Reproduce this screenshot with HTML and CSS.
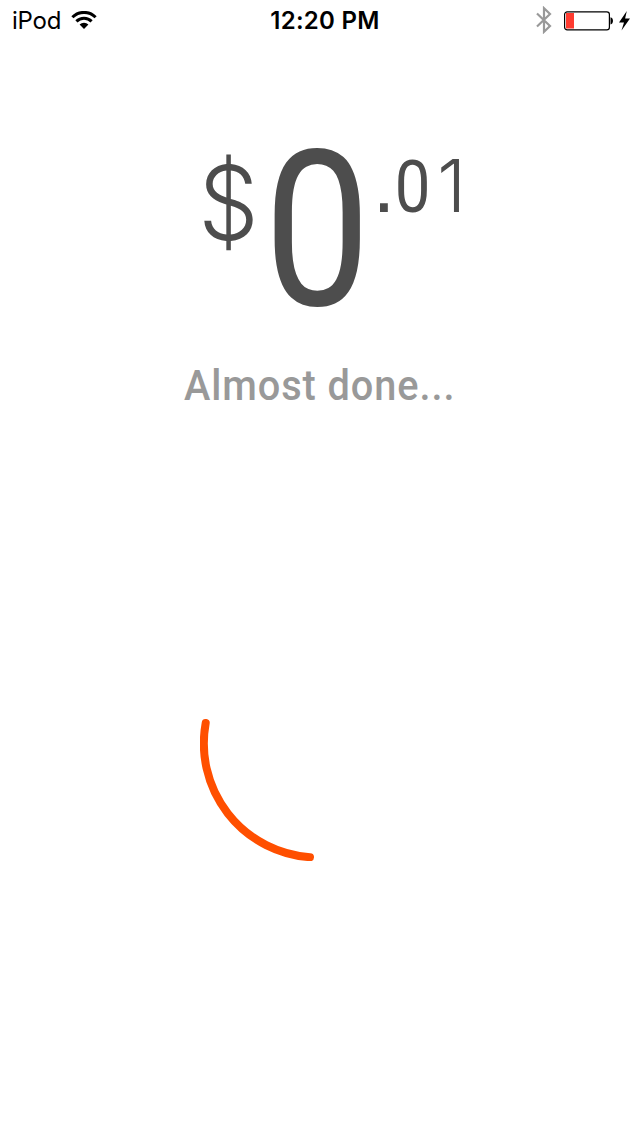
FILE: index.html
```
<!DOCTYPE html>
<html lang="en">
<head>
<meta charset="utf-8">
<title>Payment</title>
<link rel="stylesheet" href="styles.css">
</head>
<body>
<header class="status">
  <div class="carrier">
    <span>iPod</span>
    <svg class="wifi" width="26" height="19" viewBox="0 0 26 19">
      <path d="M1.4 6.2A16.4 16.4 0 0 1 24.6 6.2" fill="none" stroke="#000" stroke-width="3"/>
      <path d="M5.4 10.4A10.7 10.7 0 0 1 20.6 10.4" fill="none" stroke="#000" stroke-width="3"/>
      <path d="M8.6 13.6A6.2 6.2 0 0 1 17.4 13.6L13 18Z"/>
    </svg>
  </div>
  <time class="clock">12:20 PM</time>
  <div class="indicators">
    <svg class="bluetooth" width="18" height="28" viewBox="0 0 18 28">
      <path d="M2 7.5L15 20L9 25.8V2.2L15 8L2 20.5" fill="none" stroke="#999" stroke-width="2.2"/>
    </svg>
    <svg class="battery" width="50" height="20" viewBox="0 0 50 20">
      <rect x=".6" y=".8" width="44.8" height="18" rx="2.6" fill="none" stroke="#000" stroke-width="1.2"/>
      <rect x="2" y="2" width="8" height="15.5" fill="#ff3b30"/>
      <path d="M46.5 6.2C49.8 6.8 49.8 12.8 46.5 13.4Z"/>
    </svg>
    <svg class="bolt" width="14" height="22" viewBox="0 0 14 22">
      <path d="M8.8 1L1 12.4H6L3.5 20.5L12 8.6H7.1Z"/>
    </svg>
  </div>
</header>
<main>
  <div class="amount">
    <span class="cell currency"><span class="glyph">$</span></span>
    <span class="cell whole"><span class="glyph">0</span></span>
    <span class="cell point"><span class="glyph">.</span></span>
    <span class="cell tenth"><span class="glyph">0</span></span>
    <span class="cell cent"><span class="glyph">1</span></span>
  </div>
  <p class="message"><span>Almost done...</span></p>
  <svg class="spinner" width="236" height="236" viewBox="200 625 236 236">
    <path d="M205.7 723A114 114 0 0 0 310 857.2" fill="none" stroke="#ff4f00" stroke-width="8" stroke-linecap="round"/>
  </svg>
</main>
</body>
</html>
```
FILE: styles.css
```
* { box-sizing: border-box; }
body { margin: 0; width: 640px; height: 1136px; background: #fff; overflow: hidden; }
svg { display: block; flex: none; }
.status {
  display: grid; grid-template-columns: 200px 250px 190px; align-items: center;
  height: 40px; font-family: Inter, sans-serif; font-size: 24px; line-height: 40px; color: #000;
}
.carrier { display: flex; align-items: center; padding-left: 12px; }
.carrier span { width: 59px; letter-spacing: -.2px; padding-top: 2px; line-height: 38px; }
.clock { text-align: center; font-weight: 600; letter-spacing: .3px; padding-top: 2px; line-height: 38px; }
.indicators { display: flex; align-items: center; padding: 1px 0 0 85px; }
.bluetooth { margin-bottom: 2px; }
.battery { margin-left: 11px; }
.bolt { margin-left: 4px; }
main { display: flex; flex-direction: column; align-items: flex-start; }
.amount {
  display: flex; align-items: flex-start; height: 180px; margin: 108px 0 0 203px;
  font-family: Roboto, sans-serif; color: #4d4d4d;
}
.cell { display: flex; justify-content: center; align-items: center; }
.glyph { display: block; }
.currency { width: 51px; height: 78px; margin-top: 16px; font-family: Inter, sans-serif; font-size: 103px; font-weight: 350; line-height: 78px; }
.currency .glyph { transform: scaleX(.93); }
.whole { width: 86px; height: 160px; margin: 3px 0 0 20px; font-size: 218px; line-height: 160px; }
.whole .glyph { transform: scaleX(.87); }
.point, .tenth, .cent { height: 54px; margin-top: 12px; font-size: 73px; line-height: 54px; }
.point { width: 8px; margin: 9px 0 0 20px; font-family: "Liberation Sans", sans-serif; font-size: 82px; }
.tenth { width: 30px; margin-left: 10px; }
.tenth .glyph { transform: scaleX(.87); }
.cent { width: 17px; margin: 11px 0 0 15px; font-family: Inter, sans-serif; font-weight: 350; }
.message {
  margin: 33px 0 0; width: 640px; text-align: center; font-family: Roboto, sans-serif;
  font-size: 42px; font-weight: 500; letter-spacing: 1px; line-height: 50px; color: #999;
}
.message span { display: inline-block; transform: scaleX(.945); }
.spinner { margin: 214px 0 0 200px; }
```
